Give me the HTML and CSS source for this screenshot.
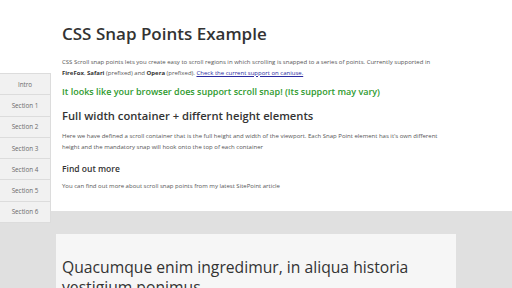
FILE: index.html
```html
<!DOCTYPE html>
<html>
<head>
<meta charset="utf-8">
<link rel="stylesheet" href="styles.css">
</head>
<body>
<nav class="nav">
  <a class="nav-item">Intro</a>
  <a class="nav-item">Section 1</a>
  <a class="nav-item">Section 2</a>
  <a class="nav-item">Section 3</a>
  <a class="nav-item">Section 4</a>
  <a class="nav-item">Section 5</a>
  <a class="nav-item">Section 6</a>
</nav>
<section class="intro">
  <h1 class="title">CSS Snap Points Example</h1>
  <p class="text text-lead">CSS Scroll snap points lets you create easy to scroll regions in which scrolling is snapped to a series of points. Currently supported in <b>FireFox</b>, <b>Safari</b> (prefixed) and <b>Opera</b> (prefixed). <a class="link">Check the current support on caniuse.</a></p>
  <p class="support">It looks like your browser does support scroll snap! (Its support may vary)</p>
  <h2 class="subtitle">Full width container + differnt height elements</h2>
  <p class="text text-body">Here we have defined a scroll container that is the full height and width of the viewport. Each Snap Point element has it's own different height and the mandatory snap will hook onto the top of each container</p>
  <h3 class="minor">Find out more</h3>
  <p class="text text-more">You can find out more about scroll snap points from my latest SitePoint article</p>
</section>
<section class="sections">
  <div class="card">
    <h2 class="card-title">Quacumque enim ingredimur, in aliqua historia vestigium ponimus</h2>
  </div>
</section>
</body>
</html>
```
FILE: styles.css
```css
html, body { margin: 0; padding: 0; }
body {
  font-family: "Open Sans", "Liberation Sans", sans-serif;
  color: #333;
  background: #e0e0e0;
  overflow: hidden;
  height: 288px;
}
.nav {
  position: fixed;
  left: 0;
  top: 73px;
  width: 50px;
  display: flex;
  flex-direction: column;
  background: #f1f1f1;
  border-top: 1px solid #dcdcdc;
  border-right: 1px solid #dcdcdc;
}
.nav-item {
  height: 20.3px;
  display: flex;
  align-items: center;
  justify-content: center;
  font-size: 6.3px;
  color: #6a6a6a;
  border-bottom: 1px solid #dcdcdc;
}
.intro {
  background: #fff;
  height: 211px;
  box-sizing: border-box;
  padding: 21px 65px 0 62px;
}
.title {
  margin: 0;
  font-size: 17px;
  font-weight: 600;
  line-height: 26px;
}
.text {
  font-size: 6px;
  line-height: 10.5px;
  margin: 0;
  color: #555;
}
.text-lead { margin-top: 10px; }
.text-body { margin-top: 6px; }
.text-more { margin-top: 6px; }
.text b { color: #333; }
.link { color: #2a2aa0; text-decoration: underline; }
.support {
  margin: 7px 0 0;
  color: #2e9a2e;
  font-weight: 600;
  font-size: 9px;
  line-height: 14px;
}
.subtitle {
  margin: 8px 0 0;
  font-size: 11.2px;
  font-weight: 600;
  line-height: 18px;
}
.minor {
  margin: 11px 0 0;
  font-size: 8.5px;
  font-weight: 600;
  line-height: 12px;
}
.sections {
  padding: 23px 0 0 56px;
}
.card {
  width: 400px;
  background: #f6f6f6;
  padding: 23px 6px 0;
  box-sizing: border-box;
  height: 100px;
}
.card-title {
  margin: 0;
  font-size: 15.7px;
  font-weight: 400;
  line-height: 20px;
}
```
